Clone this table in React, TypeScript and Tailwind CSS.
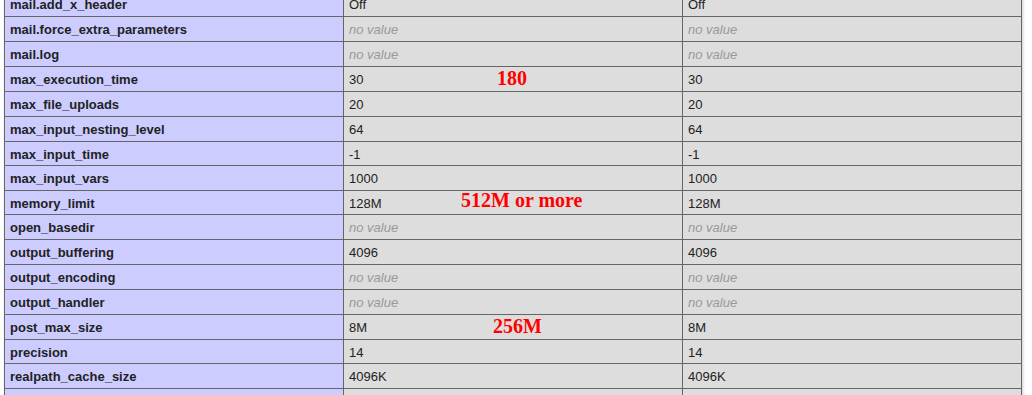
import React from "react";

type Row = {
  k: string;
  v: string | null;
  h: 24 | 25;
  note?: { text: string; pos: "a" | "b" | "c" };
};

const rows: Row[] = [
  { k: "mail.add_x_header", v: "Off", h: 25 },
  { k: "mail.force_extra_parameters", v: null, h: 25 },
  { k: "mail.log", v: null, h: 25 },
  { k: "max_execution_time", v: "30", h: 25, note: { text: "180", pos: "a" } },
  { k: "max_file_uploads", v: "20", h: 25 },
  { k: "max_input_nesting_level", v: "64", h: 25 },
  { k: "max_input_time", v: "-1", h: 24 },
  { k: "max_input_vars", v: "1000", h: 25 },
  { k: "memory_limit", v: "128M", h: 24, note: { text: "512M or more", pos: "b" } },
  { k: "open_basedir", v: null, h: 25 },
  { k: "output_buffering", v: "4096", h: 25 },
  { k: "output_encoding", v: null, h: 25 },
  { k: "output_handler", v: null, h: 25 },
  { k: "post_max_size", v: "8M", h: 25, note: { text: "256M", pos: "c" } },
  { k: "precision", v: "14", h: 24 },
  { k: "realpath_cache_size", v: "4096K", h: 25 },
  { k: "realpath_cache_ttl", v: "120", h: 25 },
];

function Val({ v }: { v: string | null }) {
  if (v === null) return <i className="text-[#999]">no value</i>;
  return <span>{v}</span>;
}

function Note({ note }: { note: { text: string; pos: "a" | "b" | "c" } }) {
  const cls =
    note.pos === "a"
      ? "absolute left-[153px] top-[1px]"
      : note.pos === "b"
      ? "absolute left-[117px] -top-[1px]"
      : "absolute left-[149px] top-[1px]";
  return (
    <span
      className={`${cls} whitespace-nowrap text-[20px] leading-[20px] font-bold text-[#ff0000] font-['Liberation_Serif','Times_New_Roman',serif]`}
    >
      {note.text}
    </span>
  );
}

export default function App() {
  return (
    <div className="min-h-[395px] overflow-hidden bg-white font-['Liberation_Sans',Arial,sans-serif] text-[13px] leading-[15px] text-[#222]">
      <div className="-mt-[9px] ml-[4px] w-[1018px] border-t border-l border-[#666] shadow-[1px_2px_3px_#ccc]">
        {rows.map((r) => (
          <div
            key={r.k}
            className={
              r.h === 25
                ? "grid h-[25px] grid-cols-[339px_339px_339px] border-b border-[#666]"
                : "grid h-[24px] grid-cols-[339px_339px_339px] border-b border-[#666]"
            }
          >
            <div className="border-r border-[#666] bg-[#ccccff] pl-[5px] pt-[5px] font-bold whitespace-nowrap">
              {r.k}
            </div>
            <div className="relative border-r border-[#666] bg-[#dddddd] pl-[5px] pt-[5px] whitespace-nowrap">
              <Val v={r.v} />
              {r.note && <Note note={r.note} />}
            </div>
            <div className="border-r border-[#666] bg-[#dddddd] pl-[5px] pt-[5px] whitespace-nowrap">
              <Val v={r.v} />
            </div>
          </div>
        ))}
      </div>
    </div>
  );
}
